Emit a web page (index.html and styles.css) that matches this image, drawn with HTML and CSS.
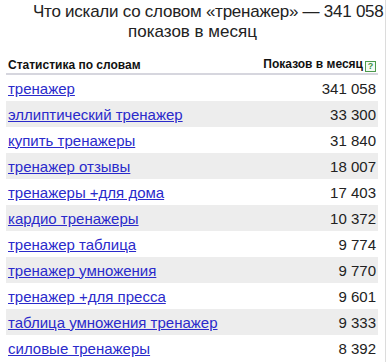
FILE: index.html
```html
<!DOCTYPE html>
<html lang="ru">
<head>
<meta charset="utf-8">
<link rel="stylesheet" href="styles.css">
</head>
<body>
<div class="page">
  <h1 class="title"><span class="line1">Что искали со словом «тренажер» — 341 058</span><span class="line2">показов в месяц</span></h1>
  <table class="stats">
    <thead>
      <tr>
        <th class="col-word">Статистика по словам</th>
        <th class="col-count">Показов в месяц<span class="help">?</span></th>
      </tr>
    </thead>
    <tbody>
      <tr><td><a href="#">тренажер</a></td><td class="num">341 058</td></tr>
      <tr><td><a href="#">эллиптический тренажер</a></td><td class="num">33 300</td></tr>
      <tr><td><a href="#">купить тренажеры</a></td><td class="num">31 840</td></tr>
      <tr><td><a href="#">тренажер отзывы</a></td><td class="num">18 007</td></tr>
      <tr><td><a href="#">тренажеры +для дома</a></td><td class="num">17 403</td></tr>
      <tr><td><a href="#">кардио тренажеры</a></td><td class="num">10 372</td></tr>
      <tr><td><a href="#">тренажер таблица</a></td><td class="num">9 774</td></tr>
      <tr><td><a href="#">тренажер умножения</a></td><td class="num">9 770</td></tr>
      <tr><td><a href="#">тренажер +для пресса</a></td><td class="num">9 601</td></tr>
      <tr><td><a href="#">таблица умножения тренажер</a></td><td class="num">9 333</td></tr>
      <tr><td><a href="#">силовые тренажеры</a></td><td class="num">8 392</td></tr>
    </tbody>
  </table>
</div>
</body>
</html>
```
FILE: styles.css
```css
html, body {
  margin: 0;
  padding: 0;
  background: #fff;
}
body {
  font-family: Arial, "Liberation Sans", sans-serif;
  color: #222;
}
.page {
  width: 386px;
  height: 362px;
  border-right: 1px solid #dcdcdc;
  box-sizing: border-box;
  padding: 0 6px;
}
.title {
  margin: 0;
  padding-top: 2px;
  font-size: 17px;
  font-weight: normal;
  line-height: 20px;
  color: #222;
}
.line1 {
  display: block;
  white-space: nowrap;
  padding-left: 27px;
  text-align: left;
  letter-spacing: -0.25px;
}
.line2 {
  display: block;
  text-align: center;
}
.stats {
  width: 372px;
  margin-top: 14px;
  border-collapse: collapse;
  font-size: 15px;
}
.stats th {
  font-size: 12px;
  font-weight: bold;
  color: #111;
  height: 16px;
  padding: 0 2px 1px;
  border-bottom: 2px solid #d6d6de;
  vertical-align: bottom;
  white-space: nowrap;
}
.col-word {
  text-align: left;
}
.col-count {
  text-align: right;
}
.help {
  display: inline-block;
  width: 9px;
  height: 9px;
  margin-left: 2px;
  border: 1px solid #4c9a4c;
  color: #3f8f3f;
  font-size: 9px;
  line-height: 9px;
  text-align: center;
  font-weight: bold;
  vertical-align: -1px;
  background: #f4fbf4;
}
.stats td {
  height: 26px;
  padding: 0 2px;
  white-space: nowrap;
}
.stats tbody tr:nth-child(even) td {
  background: #ededed;
}
.stats a {
  color: #2a2acb;
  text-decoration: underline;
}
.num {
  text-align: right;
  color: #222;
}
```
